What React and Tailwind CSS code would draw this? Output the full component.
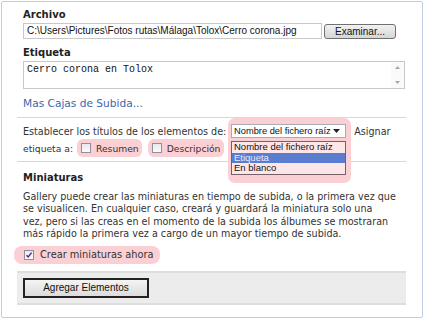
function Check({ checked }) {
  return (
    <span className="inline-flex shrink-0 items-center justify-center w-[10px] h-[10px] border border-[#8f8f9d] bg-gradient-to-b from-[#e9e9ec] to-[#fbfbfb]">
      {checked && (
        <svg width="8" height="8" viewBox="0 0 8 8">
          <path d="M1.5 4.2 L3.2 6 L6.6 1.6" fill="none" stroke="#4b2b8a" strokeWidth="1.4" />
        </svg>
      )}
    </span>
  )
}

function SelectBox({ className }) {
  return (
    <span className={`flex items-center w-[115px] h-[14px] border border-[#a5acb5] bg-white pl-[2px] text-[9.3px] leading-[12px] font-['Liberation_Sans',Arial,sans-serif] text-[#111] whitespace-nowrap ${className}`}>
      <span className="flex-1">Nombre del fichero raíz</span>
      <svg width="7" height="4" viewBox="0 0 7 4" className="mr-[5px]"><path d="M0 0 L3.5 4 L7 0Z" fill="#222" /></svg>
    </span>
  )
}

export default function App() {
  return (
    <div className="w-[423px] h-[319px] bg-white pt-[1px] pl-[1px] overflow-hidden">
      <div className="relative w-[422px] h-[317px] border border-[#bccde8] rounded-[2px] bg-white font-['DejaVu_Sans',Verdana,sans-serif] text-[#333]">
        <div className="pl-[15px] pr-[16px]">
          <div className="px-[6px] pt-[6px]">
            <div className="text-[10px] font-bold text-[#222] leading-[13px]">Archivo</div>
            <div className="flex items-center gap-[2px] mt-[2px]">
              <div className="w-[299px] h-[16px] border border-[#c8c8c8] bg-white px-[3px] text-[10px] leading-[14px] font-['Liberation_Sans',Arial,sans-serif] text-[#111] whitespace-nowrap overflow-hidden">
                C:\Users\Pictures\Fotos rutas\Málaga\Tolox\Cerro corona.jpg
              </div>
              <button className="w-[72px] h-[15px] rounded-[3px] border border-[#707070] bg-gradient-to-b from-[#f2f2f2] to-[#d6d6d6] text-[10px] leading-[13px] font-['Liberation_Sans',Arial,sans-serif] text-[#111]">
                Examinar...
              </button>
            </div>
            <div className="text-[10px] font-bold text-[#222] leading-[13px] mt-[7px]">Etiqueta</div>
            <div className="flex mt-[2px] w-[382px] h-[28px] border border-[#c8c8c8] bg-white">
              <div className="flex-1 px-[3px] pt-[2px] text-[10px] leading-[12px] font-['Liberation_Mono','Courier_New',monospace] text-[#111]">
                Cerro corona en Tolox
              </div>
              <div className="w-[13px] flex flex-col items-center justify-between py-[4px] bg-[#fafafa]">
                <svg width="5" height="3" viewBox="0 0 5 3"><path d="M0 3 L2.5 0 L5 3Z" fill="#a8a8a8" /></svg>
                <svg width="5" height="3" viewBox="0 0 5 3"><path d="M0 0 L2.5 3 L5 0Z" fill="#a8a8a8" /></svg>
              </div>
            </div>
            <div className="mt-[7px] text-[10.6px] leading-[14px] text-[#3d67ad]">Mas Cajas de Subida...</div>
          </div>

          <div className="mt-[7px] border-t border-[#d8d8d8]" />

          <div className="relative h-[43px] px-[6px] pt-[6px] text-[9.6px] leading-[15px]">
            <div className="flex items-center h-[14px]">
              <span className="whitespace-nowrap">Establecer los títulos de los elementos de:</span>
              <span className="ml-[3px] w-[115px] h-[14px] shrink-0" />
              <span className="ml-[10px]">Asignar</span>
            </div>
            <div className="flex items-center mt-[1px] text-[9.2px] whitespace-nowrap">
              <span>etiqueta a:</span>
              <span className="ml-[4px] flex items-center gap-[5px] pl-[4px] pr-[3px] h-[18px] rounded-[6px] bg-[#fbd0d4]">
                <Check />
                <span>Resumen</span>
              </span>
              <span className="ml-[6px] flex items-center gap-[5px] pl-[4px] pr-[4px] h-[18px] rounded-[6px] bg-[#fbd0d4]">
                <Check />
                <span>Descripción</span>
              </span>
            </div>

            <div className="absolute left-[211px] top-[0px] w-[123px] h-[65px] rounded-[7px] bg-[#fbd0d4]" />
            <SelectBox className="absolute left-[214px] top-[6px]" />
            <div className="absolute left-[214px] top-[23px] w-[115px] border border-[#7a5e66] bg-[#fde6e8] text-[9.5px] leading-[10.6px] font-['Liberation_Sans',Arial,sans-serif] text-[#111] whitespace-nowrap">
              <div className="px-[2px]">Nombre del fichero raíz</div>
              <div className="px-[2px] bg-[#5a7dd0] text-[#e6eaff]">Etiqueta</div>
              <div className="px-[2px]">En blanco</div>
            </div>
          </div>

          <div className="border-t border-[#d8d8d8]" />

          <div className="pl-[6px] pt-[9px]">
            <div className="text-[10px] font-bold text-[#222] leading-[13px]">Miniaturas</div>
            <p className="mt-[7px] w-[388px] text-[9.6px] leading-[12.3px] text-[#333] whitespace-nowrap">
              Gallery puede crear las miniaturas en tiempo de subida, o la primera vez que<br />
              se visualicen. En cualquier caso, creará y guardará la miniatura solo una<br />
              vez, pero si las creas en el momento de la subida los álbumes se mostraran<br />
              más rápido la primera vez a cargo de un mayor tiempo de subida.
            </p>
          </div>
          <div className="mt-[6px] -ml-[3px] inline-flex items-center gap-[6px] pl-[10px] pr-[6px] h-[18px] rounded-[8px] bg-[#fbd0d4] text-[9.8px]">
            <Check checked />
            <span>Crear miniaturas ahora</span>
          </div>

          <div className="mt-[5px] h-[34px] border-t-2 border-b-2 border-[#dedede] bg-[#ececec] px-[6px] pt-[5px]">
            <button className="block w-[126px] h-[20px] border-2 border-[#222] bg-gradient-to-b from-[#f4f4f4] to-[#dcdcdc] text-[10px] leading-[14px] font-['Liberation_Sans',Arial,sans-serif] text-[#111]">
              Agregar Elementos
            </button>
          </div>
        </div>
      </div>
    </div>
  )
}
